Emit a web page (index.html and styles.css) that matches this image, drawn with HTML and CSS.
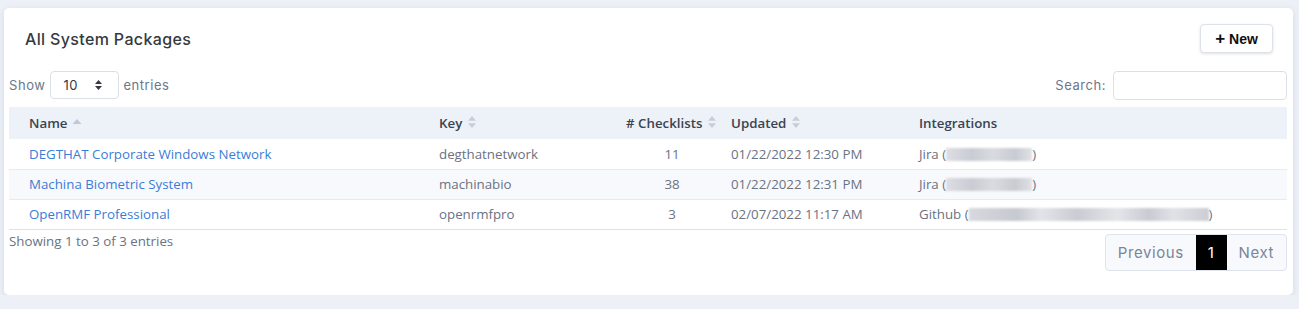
FILE: index.html
```html
<!DOCTYPE html>
<html>
<head>
<meta charset="utf-8">
<link rel="stylesheet" href="styles.css">
</head>
<body>
<div class="card">
  <div class="card-head">
    <h2 class="title">All System Packages</h2>
    <button class="btn-new"><span class="plus">+</span> New</button>
  </div>
  <div class="wrap">
    <div class="controls">
      <label class="length">Show
        <span class="select"><span>10</span>
          <svg width="9" height="12" viewBox="0 0 9 12"><path d="M4.5 1 L8 5 H1 Z M4.5 11 L8 7 H1 Z" fill="#343a40"/></svg>
        </span>
        entries</label>
      <label class="search">Search: <span class="input"></span></label>
    </div>
    <table class="tbl">
      <colgroup>
        <col class="c-name"><col class="c-key"><col class="c-chk"><col class="c-upd"><col class="c-int">
      </colgroup>
      <thead>
        <tr>
          <th>Name <svg class="sort" width="10" height="12" viewBox="0 0 10 12"><path d="M5 2 L9.5 7 H0.5 Z" fill="#c3c9d3"/></svg></th>
          <th>Key <svg class="sort" width="10" height="14" viewBox="0 0 10 14"><path d="M5 1 L9 5.7 H1 Z M5 13 L9 8.3 H1 Z" fill="#c8cdd6"/></svg></th>
          <th class="center chk"># Checklists <svg class="sort" width="10" height="14" viewBox="0 0 10 14"><path d="M5 1 L9 5.7 H1 Z M5 13 L9 8.3 H1 Z" fill="#c8cdd6"/></svg></th>
          <th>Updated <svg class="sort" width="10" height="14" viewBox="0 0 10 14"><path d="M5 1 L9 5.7 H1 Z M5 13 L9 8.3 H1 Z" fill="#c8cdd6"/></svg></th>
          <th>Integrations</th>
        </tr>
      </thead>
      <tbody>
        <tr>
          <td><a href="#">DEGTHAT Corporate Windows Network</a></td>
          <td>degthatnetwork</td>
          <td class="center">11</td>
          <td>01/22/2022 12:30 PM</td>
          <td>Jira (<span class="blur b1"></span>)</td>
        </tr>
        <tr class="odd">
          <td><a href="#">Machina Biometric System</a></td>
          <td>machinabio</td>
          <td class="center">38</td>
          <td>01/22/2022 12:31 PM</td>
          <td>Jira (<span class="blur b1"></span>)</td>
        </tr>
        <tr>
          <td><a href="#">OpenRMF Professional</a></td>
          <td>openrmfpro</td>
          <td class="center">3</td>
          <td>02/07/2022 11:17 AM</td>
          <td>Github (<span class="blur b2"></span>)</td>
        </tr>
      </tbody>
    </table>
    <div class="foot">
      <div class="info">Showing 1 to 3 of 3 entries</div>
      <div class="pager">
        <span class="pg">Previous</span>
        <span class="pg active">1</span>
        <span class="pg">Next</span>
      </div>
    </div>
  </div>
</div>
</body>
</html>
```
FILE: styles.css
```css
* { box-sizing: border-box; }
html, body { margin: 0; }
body {
  background: #edf0f7;
  padding: 8px 6px 0 4px;
  font-family: "Open Sans", "Noto Sans", sans-serif;
}
.card {
  background: #fff;
  border-radius: 5px;
  height: 287px;
  box-shadow: 0 2px 6px rgba(140, 150, 180, 0.25);
}
.card-head {
  display: flex;
  justify-content: space-between;
  align-items: center;
  padding: 16px 20px 0 21px;
  height: 45px;
}
.title {
  margin: 0;
  font-family: Inter, "Noto Sans", sans-serif;
  font-weight: 500;
  font-size: 16px;
  color: #343a40;
  letter-spacing: 0.35px;
  padding-top: 1px;
}
.btn-new {
  width: 73px;
  height: 29px;
  background: #fff;
  border: 1px solid #dde1e8;
  border-radius: 4px;
  box-shadow: 0 1px 3px rgba(0, 0, 0, 0.12);
  font-family: "Liberation Sans", Arial, sans-serif;
  font-weight: bold;
  font-size: 14px;
  color: #111;
  padding: 0;
  margin-top: 0;
}
.plus { font-size: 17px; font-weight: bold; }
.wrap { padding: 0 6px 0 5px; }
.controls {
  display: flex;
  justify-content: space-between;
  align-items: center;
  margin-top: 18px;
  height: 28px;
  font-family: Inter, "Noto Sans", sans-serif;
  font-size: 13px;
  letter-spacing: 0.55px;
  color: #6b778c;
}
.length { display: flex; align-items: center; }
.select {
  display: inline-flex;
  align-items: center;
  justify-content: space-between;
  width: 69px;
  height: 28px;
  margin: 0 4px 0 5px;
  padding: 0 15px 0 12px;
  border: 1px solid #dbe0e8;
  border-radius: 4px;
  color: #343a40;
  font-size: 13px;
}
.search { display: flex; align-items: center; }
.input {
  display: inline-block;
  width: 174px;
  height: 29px;
  margin-left: 7px;
  border: 1px solid #dbe0e8;
  border-radius: 4px;
}
.tbl {
  width: 100%;
  margin-top: 8px;
  border-collapse: collapse;
  table-layout: fixed;
  font-size: 13.3px;
}
.c-name { width: 410px; }
.c-key { width: 214px; }
.c-chk { width: 78px; }
.c-upd { width: 188px; }
.tbl th {
  background: #edf1f8;
  height: 32px;
  text-align: left;
  font-weight: 600;
  color: #3b4350;
  padding: 0 0 0 20px;
  white-space: nowrap;
}
.tbl th.center, .tbl td.center { text-align: center; padding-left: 0; }
.tbl th.chk { overflow: visible; text-indent: -7px; }
.sort { vertical-align: -1px; margin-left: 1px; }
.tbl td {
  height: 30px;
  padding: 0 0 0 20px;
  color: #6a7283;
  border-top: 1px solid #e7ebf1;
  white-space: nowrap;
}
.tbl tbody tr:first-child td { border-top: none; }
.tbl tbody tr:last-child td { border-bottom: 1px solid #dbe2ec; }
.tbl tr.odd td { background: #f8f9fc; }
.tbl a { color: #3a7dd8; text-decoration: none; }
.blur {
  display: inline-block;
  height: 13px;
  vertical-align: -2px;
  background: linear-gradient(90deg, #dcdee3, #c9ccd3 30%, #d9dbe0 55%, #c8cbd2 80%, #dfe1e5);
  filter: blur(1px);
}
.b1 { width: 86px; }
.b2 { width: 240px; background: linear-gradient(90deg, #d7d9de, #c6c9d0 20%, #e2e4e8 30%, #c9ccd2 45%, #e4e5e9 62%, #c8cbd2 75%, #e0e2e6 85%, #cbced4); }
.foot {
  display: flex;
  justify-content: space-between;
  align-items: flex-start;
  padding-top: 2px;
}
.info {
  font-size: 13.3px;
  color: #6a7283;
  padding-top: 0;
}
.pager {
  display: flex;
  height: 37px;
  margin-top: 2px;
  border: 1px solid #dee3ec;
  border-radius: 4px;
  background: #f8f9fc;
  font-family: Inter, "Noto Sans", sans-serif;
  font-size: 15px;
  letter-spacing: 0.6px;
  color: #7a8599;
  overflow: hidden;
}
.pg { display: flex; align-items: center; padding: 0 12px; }
.pg.active { background: #000; color: #fff; padding: 0 12px; }
```
